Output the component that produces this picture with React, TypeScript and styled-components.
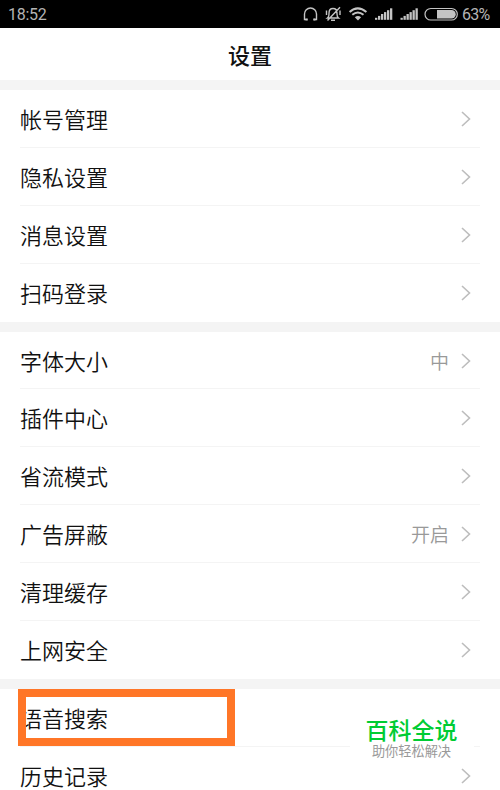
import React from "react";
import styled, { createGlobalStyle } from "styled-components";

const GlobalStyle = createGlobalStyle`
  html, body { margin: 0; background: #fff; overflow: hidden; }
  * { box-sizing: border-box; }
`;

const Screen = styled.div`
  position: relative;
  width: 500px;
  height: 790px;
  overflow: hidden;
  background: #fff;
  color: #111;
  font-family: "Noto Sans CJK SC", sans-serif;
`;

const StatusBar = styled.div`
  display: flex;
  align-items: center;
  justify-content: space-between;
  height: 27.5px;
  padding: 1px 8px 0 8px;
  background: #000;
  color: #b4b4b4;
  font: 400 16px/27px Roboto, sans-serif;
`;

const Clock = styled.span`
  letter-spacing: -0.3px;
`;

const StatusIcons = styled.div`
  display: flex;
  align-items: center;
`;

const StatusSvg = styled.svg`
  display: block;
  width: 156px;
  height: 24px;
  margin-right: 4px;
`;

const Percent = styled.span`
  width: 30px;
  letter-spacing: -0.7px;
`;

const Header = styled.header`
  display: flex;
  align-items: center;
  justify-content: center;
  height: 52.5px;
  font-size: 22px;
  font-weight: 500;
  line-height: 30px;
`;

const Group = styled.section`
  border-top: 10px solid #f4f4f4;
`;

const Row = styled.div`
  display: flex;
  align-items: center;
  height: 57.9px;
  margin: 0 20px;
  padding: 1px 9px 0 0;
  border-bottom: 1px solid #f4f4f4;

  &:last-child {
    border-bottom-color: transparent;
  }
`;

const Label = styled.span`
  flex: 1;
  margin-top: -2px;
  font-size: 22px;
  font-weight: 350;
  line-height: 30px;
`;

const Value = styled.span`
  margin-right: 12px;
  color: #999;
  font-size: 19px;
  font-weight: 350;
  line-height: 28px;
`;

const Chevron = styled.svg`
  display: block;
  width: 10px;
  height: 16px;
  fill: none;
  stroke: #bdbdbd;
  stroke-width: 1.6;
`;

const Highlight = styled.div`
  position: absolute;
  left: 18px;
  top: 689px;
  width: 217px;
  height: 57px;
  border: 8px solid #ff7627;
`;

const Watermark = styled.div`
  position: absolute;
  left: 350px;
  top: 705px;
  width: 124px;
  height: 61px;
  padding-top: 12px;
  background: #fff;
  text-align: center;
`;

const Brand = styled.div`
  margin-left: -1px;
  color: #0c3;
  font-size: 23px;
  font-weight: 500;
  line-height: 24px;
`;

const Slogan = styled.div`
  margin: 2px 0 0 -1px;
  color: #999;
  font-size: 13.2px;
  line-height: 16px;
  white-space: nowrap;
`;

type Item = { label: string; value?: string };

const groups: Item[][] = [
  [{ label: "帐号管理" }, { label: "隐私设置" }, { label: "消息设置" }, { label: "扫码登录" }],
  [
    { label: "字体大小", value: "中" },
    { label: "插件中心" },
    { label: "省流模式" },
    { label: "广告屏蔽", value: "开启" },
    { label: "清理缓存" },
    { label: "上网安全" },
  ],
  [{ label: "语音搜索" }, { label: "历史记录" }],
];

const bars = [0, 1, 2, 3, 4, 5];

function SignalBars({ x }: { x: number }) {
  return (
    <g fill="#c4c4c4">
      {bars.map((i) => (
        <rect key={i} x={x + i * 3} y={15.8 - i * 1.9} width={2.3} height={2 + i * 1.9} />
      ))}
    </g>
  );
}

function StatusGlyphs() {
  return (
    <StatusSvg viewBox="302 2 156 24" fill="none" stroke="#c4c4c4" strokeWidth="1.4">
      <path d="M306.500 19.500H304.500V14a6 6 0 0 1 12 0v5.500H314" />
      <path d="M305.500 19.500h2.300M313.200 19.500h2.300" strokeWidth="2.200" />
      <path d="M327.500 18c1.800-1.300 1.500-3 1.500-4.800 0-3 1.500-4.700 4-4.700s4 1.700 4 4.700c0 1.800-.3 3.500 1.500 4.800zM331 20.300h4M326.500 10.500v4.500M340 10.500v4.500M327.500 20.500L340 7.200" />
      <path d="M349.600 12q8-7.200 16.800 0M352.300 14.800q5.500-4.700 11.200 0" strokeWidth="2" />
      <path d="M354.800 17.300q3.100-2.600 6.300 0L358 20.600z" fill="#c4c4c4" stroke="none" />
      <g transform="translate(0 2)" stroke="none">
        <SignalBars x={375} />
        <SignalBars x={400.500} />
      </g>
      <rect x="425" y="8.500" width="32.300" height="11.500" rx="5.750" strokeWidth="1.200" />
      <path d="M437 10h14.500a4.200 4.200 0 0 1 0 8.500H437z" fill="#c4c4c4" stroke="none" />
    </StatusSvg>
  );
}

export default function App() {
  return (
    <Screen>
      <GlobalStyle />
      <StatusBar>
        <Clock>18:52</Clock>
        <StatusIcons>
          <StatusGlyphs />
          <Percent>63%</Percent>
        </StatusIcons>
      </StatusBar>
      <Header>设置</Header>
      {groups.map((items, index) => (
        <Group key={index}>
          {items.map((item) => (
            <Row key={item.label}>
              <Label>{item.label}</Label>
              {item.value && <Value>{item.value}</Value>}
              <Chevron viewBox="0 0 10 16">
                <path d="M1 1l7.500 7L1 15" />
              </Chevron>
            </Row>
          ))}
        </Group>
      ))}
      <Highlight />
      <Watermark>
        <Brand>百科全说</Brand>
        <Slogan>助你轻松解决</Slogan>
      </Watermark>
    </Screen>
  );
}
